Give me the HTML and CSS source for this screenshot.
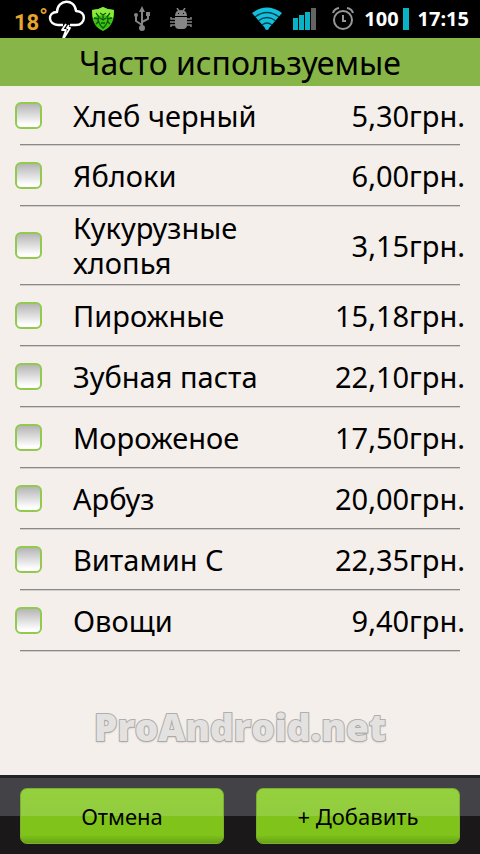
FILE: index.html
```html
<!DOCTYPE html>
<html lang="ru">
<head>
<meta charset="utf-8">
<meta name="viewport" content="width=device-width, initial-scale=1">
<title>Часто используемые</title>
<link rel="stylesheet" href="styles.css">
</head>
<body>
<div class="status">
  <div class="status-group">
    <span class="temp">18<span class="degree">°</span></span>
    <svg class="cloud" width="38" height="38" viewBox="0 0 38 38" fill="none" stroke="#fff" stroke-width="2.4" stroke-linejoin="round">
      <path d="M15 25H10C0 25 -1 12 9 12C9 -1 27 -2 28 11C39 11 38 25 28 25H22"/>
      <path d="M18 24L14 30H18L15 38M21 25L19 28H22L16 38" stroke-width="1.8"/>
    </svg>
    <svg class="shield" width="24" height="26" viewBox="0 0 24 26">
      <path d="M12 1Q17 4 23 4Q24 20 12 25Q0 20 1 4Q7 4 12 1Z" fill="#3fc312"/>
      <path d="M12 1Q17 4 23 4L22 12Q12 6 2 12L1 4Q7 4 12 1Z" fill="#8bea3c"/>
      <path d="M5 7L8 11L7 15L10 20L12 22L14 20L17 15L16 11L19 7M3 12L8 13M21 12L16 13M5 18L8 15M19 18L16 15M9 12L12 14L15 12M10 17H14M9 7L12 9L15 7M12 9V14" fill="none" stroke="#0b5c08" stroke-width="1.3"/>
    </svg>
    <svg class="usb" width="18" height="26" viewBox="0 0 18 26" fill="none" stroke="#858585" stroke-width="2">
      <path d="M9 4V21M9 19L3 15V9M9 16L15 13V8"/>
      <path d="M9 0L12 6H6ZM13 6H17V10H13Z" fill="#858585" stroke="none"/>
      <circle cx="3" cy="9" r="2" fill="#858585" stroke="none"/><circle cx="9" cy="22" r="3" fill="#858585" stroke="none"/>
    </svg>
    <svg class="bug" width="22" height="22" viewBox="0 0 22 22">
      <path d="M5 8Q5 2 11 2Q17 2 17 8ZM5 9H17V17Q17 21 13 21H9Q5 21 5 17Z" fill="#858585"/>
      <path d="M7 0L9 3M15 0L13 3M5 11H1V9M5 14H0M5 17H1V19M17 11H21V9M17 14H22M17 17H21V19" fill="none" stroke="#858585" stroke-width="1.5"/>
      <path d="M8 5H9V6H8ZM13 5H14V6H13Z" fill="#000"/>
    </svg>
  </div>
  <div class="status-group">
    <svg class="wifi" width="30" height="24" viewBox="0 0 30 24">
      <path d="M0 6Q15 -5 30 6L17 21A2 2 0 1 1 13 21Z" fill="#14bfdb"/>
      <path d="M3 10Q15 1 27 10M6 14Q15 7 24 14M10 18Q15 14 20 18" fill="none" stroke="#043e4b" stroke-width="1.3"/>
    </svg>
    <svg class="signal" width="24" height="22" viewBox="0 0 24 22">
      <path d="M0 10H5V22H0ZM6 7H11V22H6ZM12 4H17V22H12Z" fill="#08b3c5"/><path d="M18 0H23V22H18Z" fill="#646464"/>
    </svg>
    <svg class="alarm" width="22" height="24" viewBox="0 0 22 24" fill="none" stroke="#969696" stroke-width="2">
      <circle cx="11" cy="13" r="9"/><path d="M1 6Q2 2 7 1M21 6Q20 2 15 1M11 8V14H14"/>
    </svg>
    <span class="percent">100</span>
    <span class="level"></span>
    <span class="clock">17:15</span>
  </div>
</div>
<h1 class="title">Часто используемые</h1>
<main class="content">
  <ul class="items">
    <li><label class="item"><input class="check" type="checkbox"><span class="name">Хлеб черный</span><span class="price">5,30грн.</span></label></li>
    <li><label class="item"><input class="check" type="checkbox"><span class="name">Яблоки</span><span class="price">6,00грн.</span></label></li>
    <li><label class="item"><input class="check" type="checkbox"><span class="name">Кукурузные хлопья</span><span class="price">3,15грн.</span></label></li>
    <li><label class="item"><input class="check" type="checkbox"><span class="name">Пирожные</span><span class="price">15,18грн.</span></label></li>
    <li><label class="item"><input class="check" type="checkbox"><span class="name">Зубная паста</span><span class="price">22,10грн.</span></label></li>
    <li><label class="item"><input class="check" type="checkbox"><span class="name">Мороженое</span><span class="price">17,50грн.</span></label></li>
    <li><label class="item"><input class="check" type="checkbox"><span class="name">Арбуз</span><span class="price">20,00грн.</span></label></li>
    <li><label class="item"><input class="check" type="checkbox"><span class="name">Витамин С</span><span class="price">22,35грн.</span></label></li>
    <li><label class="item"><input class="check" type="checkbox"><span class="name">Овощи</span><span class="price">9,40грн.</span></label></li>
  </ul>
  <p class="brand">ProAndroid.net</p>
</main>
<footer class="actions">
  <button class="action" type="button">Отмена</button>
  <button class="action" type="button">+ Добавить</button>
</footer>
</body>
</html>
```
FILE: styles.css
```css
* { box-sizing: border-box; }
body {
  margin: 0;
  min-height: 100vh;
  display: flex;
  flex-direction: column;
  background: #f4efeb;
  color: #000;
  font-family: "Noto Sans", "Open Sans", sans-serif;
}
.status {
  height: 38px;
  display: flex;
  justify-content: space-between;
  padding: 0 11px 0 14px;
  background: #000;
  color: #fff;
}
.status-group { display: flex; align-items: center; }
.temp {
  display: flex;
  align-items: flex-start;
  width: 34px;
  padding-top: 8px;
  color: #e6a52e;
  font: 700 22px/28px Roboto, sans-serif;
}
.degree { line-height: 16px; }
.cloud { flex: none; }
.shield { margin-left: 5px; }
.usb { margin-left: 18px; }
.bug { margin-left: 19px; }
.signal { margin-left: 11px; }
.alarm { margin-left: 15px; }
.percent, .clock { font-size: 20px; line-height: 38px; font-weight: 700; }
.percent { margin-left: 10px; }
.level { width: 6px; height: 22px; margin-left: 4px; background: #08b3c5; }
.clock { margin-left: 9px; }
.title {
  margin: 0;
  background: #87b547;
  text-align: center;
  font-size: 32px;
  line-height: 50px;
  height: 48px;
  font-weight: 400;
}
.content { flex: 1; display: flex; flex-direction: column; }
.items { list-style: none; margin: 0; padding: 0; }
.items li::after {
  content: "";
  display: block;
  height: 1px;
  margin: 0 20px;
  background: #888;
  box-shadow: 0 1px #d2cecb;
}
.item {
  display: flex;
  align-items: center;
  min-height: 60px;
  padding: 4px 15px;
  font-size: 29px;
  line-height: 35px;
}
.items li:first-child .item { min-height: 58px; }
.check {
  appearance: none;
  flex: none;
  width: 27px;
  height: 27px;
  margin: 0 31px 0 0;
  border: 2px solid #94c950;
  border-radius: 6px;
  background: linear-gradient(#b5b5b5, #fff 90%);
}
.check:checked { background: #84c52b; }
.name { flex: 1; max-width: 220px; }
.price { margin-left: auto; white-space: nowrap; }
.brand {
  margin: auto 0 24px;
  text-align: center;
  font: 800 37px/48px "Open Sans", sans-serif;
  color: #e4e2e1;
  -webkit-text-stroke: 2px #b2afad;
  paint-order: stroke fill;
  text-shadow: 0 1px 2px #aaa7a5;
}
.actions {
  display: flex;
  gap: 32px;
  padding: 10px 20px;
  border-top: 3px solid #202226;
  background: linear-gradient(#434246 50%, #1a1819 50%);
}
.action {
  flex: 1;
  height: 56px;
  border: 1px solid #7cae34;
  border-radius: 7px;
  background: linear-gradient(#94d13c, #92cc40 50%, #80c41b 50%, #80c41b 85%, #66a314);
  color: #000;
  font: 22px/32px "Noto Sans", "Open Sans", sans-serif;
}
```
